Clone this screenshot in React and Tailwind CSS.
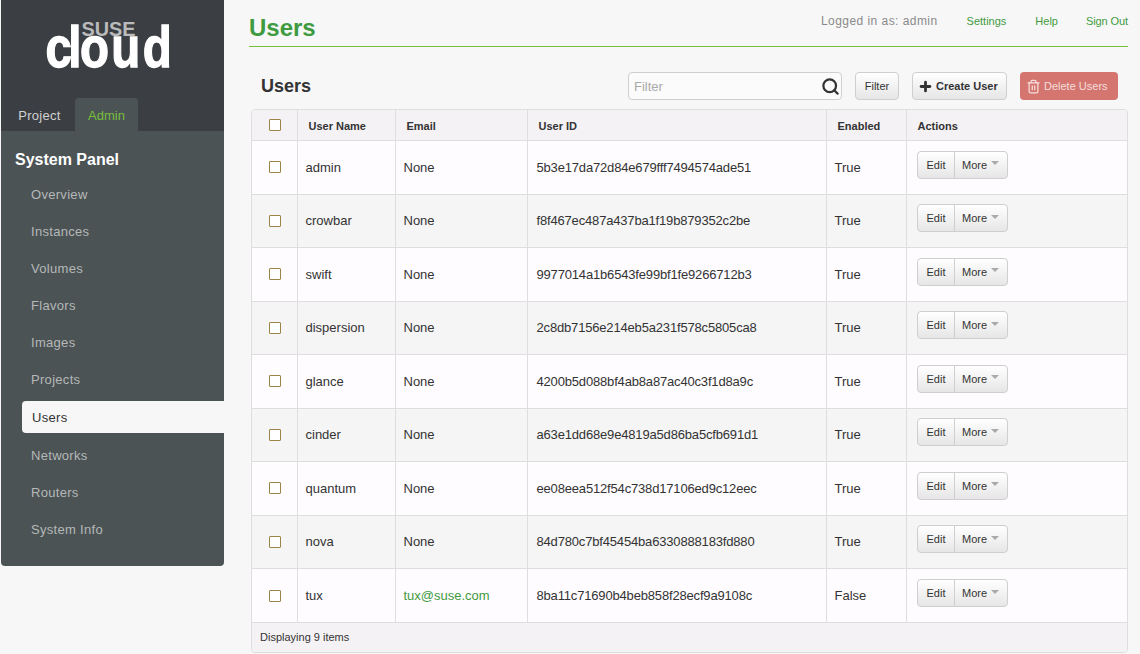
import React from "react";
import { Search, Plus, Trash2 } from "lucide-react";

const navItems = ["Overview", "Instances", "Volumes", "Flavors", "Images", "Projects", "Users", "Networks", "Routers", "System Info"];

const users = [
  { name: "admin", email: "None", id: "5b3e17da72d84e679fff7494574ade51", enabled: "True" },
  { name: "crowbar", email: "None", id: "f8f467ec487a437ba1f19b879352c2be", enabled: "True" },
  { name: "swift", email: "None", id: "9977014a1b6543fe99bf1fe9266712b3", enabled: "True" },
  { name: "dispersion", email: "None", id: "2c8db7156e214eb5a231f578c5805ca8", enabled: "True" },
  { name: "glance", email: "None", id: "4200b5d088bf4ab8a87ac40c3f1d8a9c", enabled: "True" },
  { name: "cinder", email: "None", id: "a63e1dd68e9e4819a5d86ba5cfb691d1", enabled: "True" },
  { name: "quantum", email: "None", id: "ee08eea512f54c738d17106ed9c12eec", enabled: "True" },
  { name: "nova", email: "None", id: "84d780c7bf45454ba6330888183fd880", enabled: "True" },
  { name: "tux", email: "tux@suse.com", id: "8ba11c71690b4beb858f28ecf9a9108c", enabled: "False" },
];

const btn = "h-7 rounded border border-[#cfcfcf] bg-gradient-to-b from-white to-[#e6e6e6] text-[11px] text-[#333]";

const Checkbox = () => (
  <span className="ml-[17px] block h-3 w-3 rounded-[1px] border border-[#9a8547] bg-white"></span>
);

const Logo = () => (
  <svg width="140" height="72" viewBox="0 0 140 72" className="block">
    <text x="65.5" y="20" textAnchor="middle" fontFamily="'Liberation Sans', sans-serif" fontWeight="700" fontSize="21" textLength="54" lengthAdjust="spacingAndGlyphs" fill="#b9babb">SUSE</text>
    <text x="0 21 32 61 90" transform="translate(2.5 50.5) scale(1.08 1.3)" fontFamily="'Liberation Sans', sans-serif" fontWeight="700" fontSize="44" fill="#ffffff" stroke="#ffffff" strokeWidth="1">cloud</text>
  </svg>
);

const Sidebar = () => (
  <aside className="ml-px h-[566px] w-[223px] shrink-0 overflow-hidden rounded-b bg-[#4c5355]">
    <div className="flex h-[131px] flex-col justify-between bg-[#3b3e42]">
      <div className="flex justify-center pt-4">
        <Logo />
      </div>
      <div className="flex items-end">
        <span className="flex h-[33px] w-[74px] items-center justify-center pl-[3px] pt-[2px] text-[13px] tracking-[0.3px] text-[#d2d2d2]">Project</span>
        <span className="flex h-[33px] w-[63px] items-center justify-center rounded-t bg-[#4c5355] pt-[2px] text-[13px] text-[#76bf3c]">Admin</span>
      </div>
    </div>
    <h2 className="pl-[14px] pt-[19px] text-base font-bold leading-[20px] text-white">System Panel</h2>
    <nav className="mt-[6px] flex flex-col">
      {navItems.map((item) =>
        item === "Users" ? (
          <a key={item} className="mb-[4px] ml-[21px] mt-[3px] flex h-8 items-center rounded-l bg-[#f7f7f7] pl-[10px] pt-[1px] text-[13px] tracking-[0.3px] text-[#333]">
            {item}
          </a>
        ) : (
          <a key={item} className="flex h-[37px] items-center pl-[30px] text-[13px] tracking-[0.3px] text-[#b4b8b8]">
            {item}
          </a>
        )
      )}
    </nav>
  </aside>
);

const TopBar = () => (
  <header className="flex h-[47px] items-start justify-between border-b border-[#76bf3c]">
    <h1 className="pt-[12px] text-2xl font-bold leading-[32px] text-[#3f9b3f]">Users</h1>
    <div className="flex items-center pt-[13px] text-[11px] leading-[14px] text-[#3f9b3f]">
      <span className="mr-[29px] text-xs tracking-[0.45px] text-[#8a8a8a]">Logged in as: admin</span>
      <a className="mr-[29px]">Settings</a>
      <a className="mr-[28px]">Help</a>
      <a className="tracking-[-0.1px]">Sign Out</a>
    </div>
  </header>
);

const Toolbar = () => (
  <div className="ml-[12px] mr-[10px] mt-[25px] flex h-7 items-center">
    <h2 className="text-lg font-bold text-[#333]">Users</h2>
    <div className="ml-auto flex h-7 w-[214px] items-center justify-between rounded border border-[#cfcfcf] bg-[#fbfbfb] pl-[5px] pr-[1px]">
      <span className="pt-[1px] text-[13px] text-[#aaa]">Filter</span>
      <Search size={19} strokeWidth={2.8} className="text-[#333]" />
    </div>
    <button className={`${btn} ml-[13px] w-11`}>Filter</button>
    <button className={`${btn} ml-[13px] flex w-[95px] items-center justify-start gap-[3px] pl-[5px] font-bold`}>
      <Plus size={15} strokeWidth={4.5} />
      Create User
    </button>
    <button className="ml-[13px] flex h-7 w-[98px] items-center justify-start gap-[3px] rounded bg-[#d4766f] pl-[6px] text-[11px] text-[#f6dedc]">
      <Trash2 size={15} />
      Delete Users
    </button>
  </div>
);

const UserTable = () => (
  <div className="ml-[2px] mt-[9px] overflow-hidden rounded border border-[#dedede]">
    <table className="w-full table-fixed border-collapse text-[13px] text-[#333]">
      <colgroup>
        <col className="w-[45px]" />
        <col className="w-[98px]" />
        <col className="w-[132px]" />
        <col className="w-[299px]" />
        <col className="w-[80px]" />
        <col />
      </colgroup>
      <thead>
        <tr className="h-[30.5px] bg-[#f5f2f5] text-left text-[11px] font-bold">
          <th className="border-r border-[#dedede]"><Checkbox /></th>
          <th className="border-r border-[#dedede] pl-[11px] pt-[2px]">User Name</th>
          <th className="border-r border-[#dedede] pl-[11px] pt-[2px]">Email</th>
          <th className="border-r border-[#dedede] pl-[11px] pt-[2px]">User ID</th>
          <th className="border-r border-[#dedede] pl-[11px] pt-[2px]">Enabled</th>
          <th className="pl-[11px] pt-[2px]">Actions</th>
        </tr>
      </thead>
      <tbody>
        {users.map((u, i) => (
          <tr key={u.name} className={`h-[53.5px] border-t border-[#dedede] ${i % 2 ? "bg-[#f5f5f5]" : "bg-[#fffcff]"}`}>
            <td className="border-r border-[#dedede]"><Checkbox /></td>
            <td className="border-r border-[#dedede] pl-2">{u.name}</td>
            <td className={`border-r border-[#dedede] pl-2 ${u.email === "None" ? "" : "text-[#3f9b3f]"}`}>{u.email}</td>
            <td className="border-r border-[#dedede] pl-[9px] tracking-[-0.17px]">{u.id}</td>
            <td className="border-r border-[#dedede] pl-2">{u.enabled}</td>
            <td className="pl-[10px]">
              <div className="mb-[5px] flex h-7 w-[91px] overflow-hidden rounded border border-[#cfcfcf] bg-gradient-to-b from-white to-[#e6e6e6] text-[11px]">
                <span className="flex w-[37px] items-center justify-center border-r border-[#cfcfcf] pl-[1px]">Edit</span>
                <span className="flex flex-1 items-center justify-center gap-1">
                  More
                  <span className="mb-[3px] h-0 w-0 border-x-4 border-t-4 border-x-transparent border-t-[#aaa]"></span>
                </span>
              </div>
            </td>
          </tr>
        ))}
      </tbody>
    </table>
    <div className="flex h-[30px] items-center border-t border-[#dedede] bg-[#f5f2f5] pl-2 text-[11px] text-[#333]">
      Displaying 9 items
    </div>
  </div>
);

const App = () => (
  <div className="flex h-[654px] w-[1140px] overflow-hidden bg-[#f7f7f7] font-['Liberation_Sans',sans-serif]">
    <Sidebar />
    <main className="ml-[25px] w-[879px]">
      <TopBar />
      <Toolbar />
      <UserTable />
    </main>
  </div>
);

export default App;
